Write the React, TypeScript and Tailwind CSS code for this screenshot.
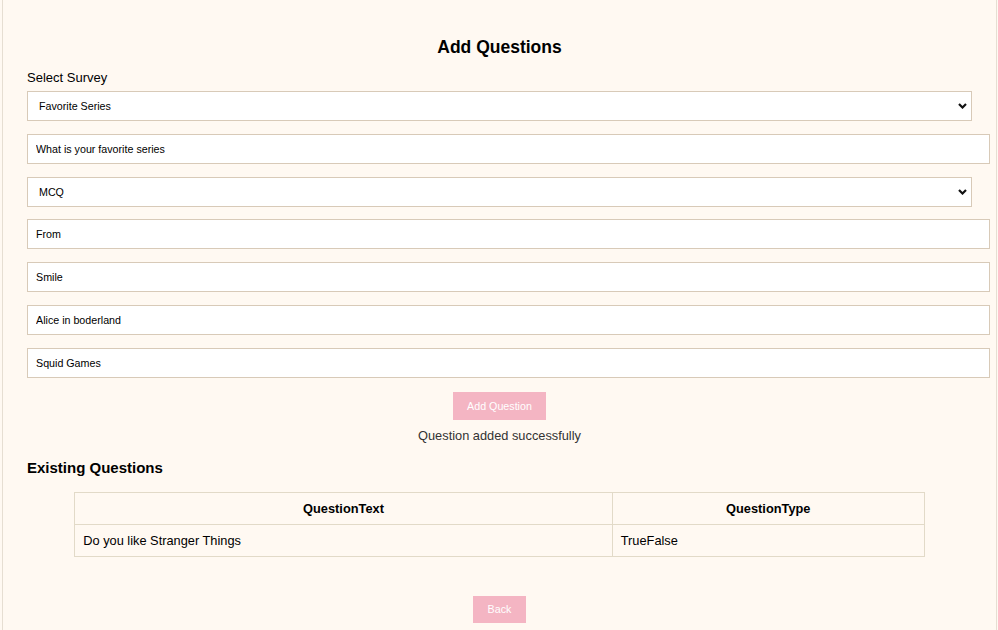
import React, { useState } from 'react';

const surveys = ['Favorite Series', 'Favorite Movies', 'Favorite Food'];
const types = ['MCQ', 'TrueFalse', 'Text'];

const existing = [{ text: 'Do you like Stranger Things', type: 'TrueFalse' }];

const Chevron = () => (
  <svg
    className="pointer-events-none absolute right-[5px] top-[12px]"
    width="9"
    height="6"
    viewBox="0 0 9 6"
  >
    <path d="M1 1 L4.5 4.5 L8 1" fill="none" stroke="#111" strokeWidth="2.2" />
  </svg>
);

const SelectBox = ({
  value,
  options,
  onChange,
  className = '',
}: {
  value: string;
  options: string[];
  onChange: (v: string) => void;
  className?: string;
}) => (
  <div className={`relative w-full ${className}`}>
    <select
      value={value}
      onChange={(e) => onChange(e.target.value)}
      className="block h-[30px] w-full appearance-none border border-[#d8cab8] bg-white pl-[11px] text-[10.7px] text-black outline-none"
    >
      {options.map((o) => (
        <option key={o}>{o}</option>
      ))}
    </select>
    <Chevron />
  </div>
);

const TextBox = ({
  value,
  onChange,
}: {
  value: string;
  onChange: (v: string) => void;
}) => (
  <input
    value={value}
    onChange={(e) => onChange(e.target.value)}
    className="block h-[30px] w-[calc(100%+18px)] border border-[#d8cab8] bg-white px-[8px] text-[10.7px] text-black outline-none"
  />
);

export default function App() {
  const [survey, setSurvey] = useState('Favorite Series');
  const [question, setQuestion] = useState('What is your favorite series');
  const [type, setType] = useState('MCQ');
  const [options, setOptions] = useState([
    'From',
    'Smile',
    'Alice in boderland',
    'Squid Games',
  ]);

  const setOption = (i: number, v: string) =>
    setOptions(options.map((o, j) => (j === i ? v : o)));

  return (
    <div
      className="min-h-screen bg-[#fff9f2] text-black"
      style={{ fontFamily: '"Liberation Sans", Arial, sans-serif' }}
    >
      <div className="ml-[2px] flex min-h-[630px] w-[995px] flex-col border-x border-[#e6ded2] px-6">
        <h2 className="pt-[37px] text-center text-[17.5px] font-bold leading-[20px]">
          Add Questions
        </h2>
        <label className="mt-[13px] text-[13px] leading-[15px]">
          Select Survey
        </label>
        <div className="mt-[6px] flex flex-col gap-[13px]">
          <SelectBox value={survey} options={surveys} onChange={setSurvey} />
          <TextBox value={question} onChange={setQuestion} />
          <SelectBox
            value={type}
            options={types}
            onChange={setType}
            className="mb-[-1px]"
          />
          {options.map((o, i) => (
            <TextBox key={i} value={o} onChange={(v) => setOption(i, v)} />
          ))}
        </div>
        <button className="mt-[14px] h-[28px] w-[93px] self-center bg-[#f4b5c3] text-[10.7px] text-white">
          Add Question
        </button>
        <p className="mt-[8px] text-center text-[12.8px] leading-[16px] text-[#333]">
          Question added successfully
        </p>
        <h3 className="mt-[15px] text-[15px] font-bold leading-[18px]">
          Existing Questions
        </h3>
        <table className="mx-auto mt-[15px] w-[90%] border-collapse text-[12.8px]">
          <thead>
            <tr className="h-[32px]">
              <th className="border border-[#e2dac8] px-2 font-bold">
                QuestionText
              </th>
              <th className="w-[312px] border border-[#e2dac8] px-2 font-bold">
                QuestionType
              </th>
            </tr>
          </thead>
          <tbody>
            {existing.map((q) => (
              <tr key={q.text} className="h-[32px]">
                <td className="border border-[#e2dac8] px-2">{q.text}</td>
                <td className="border border-[#e2dac8] px-2">{q.type}</td>
              </tr>
            ))}
          </tbody>
        </table>
        <button className="mt-[39px] h-[27px] w-[53px] self-center bg-[#f4b5c3] text-[10.7px] text-white">
          Back
        </button>
      </div>
    </div>
  );
}
